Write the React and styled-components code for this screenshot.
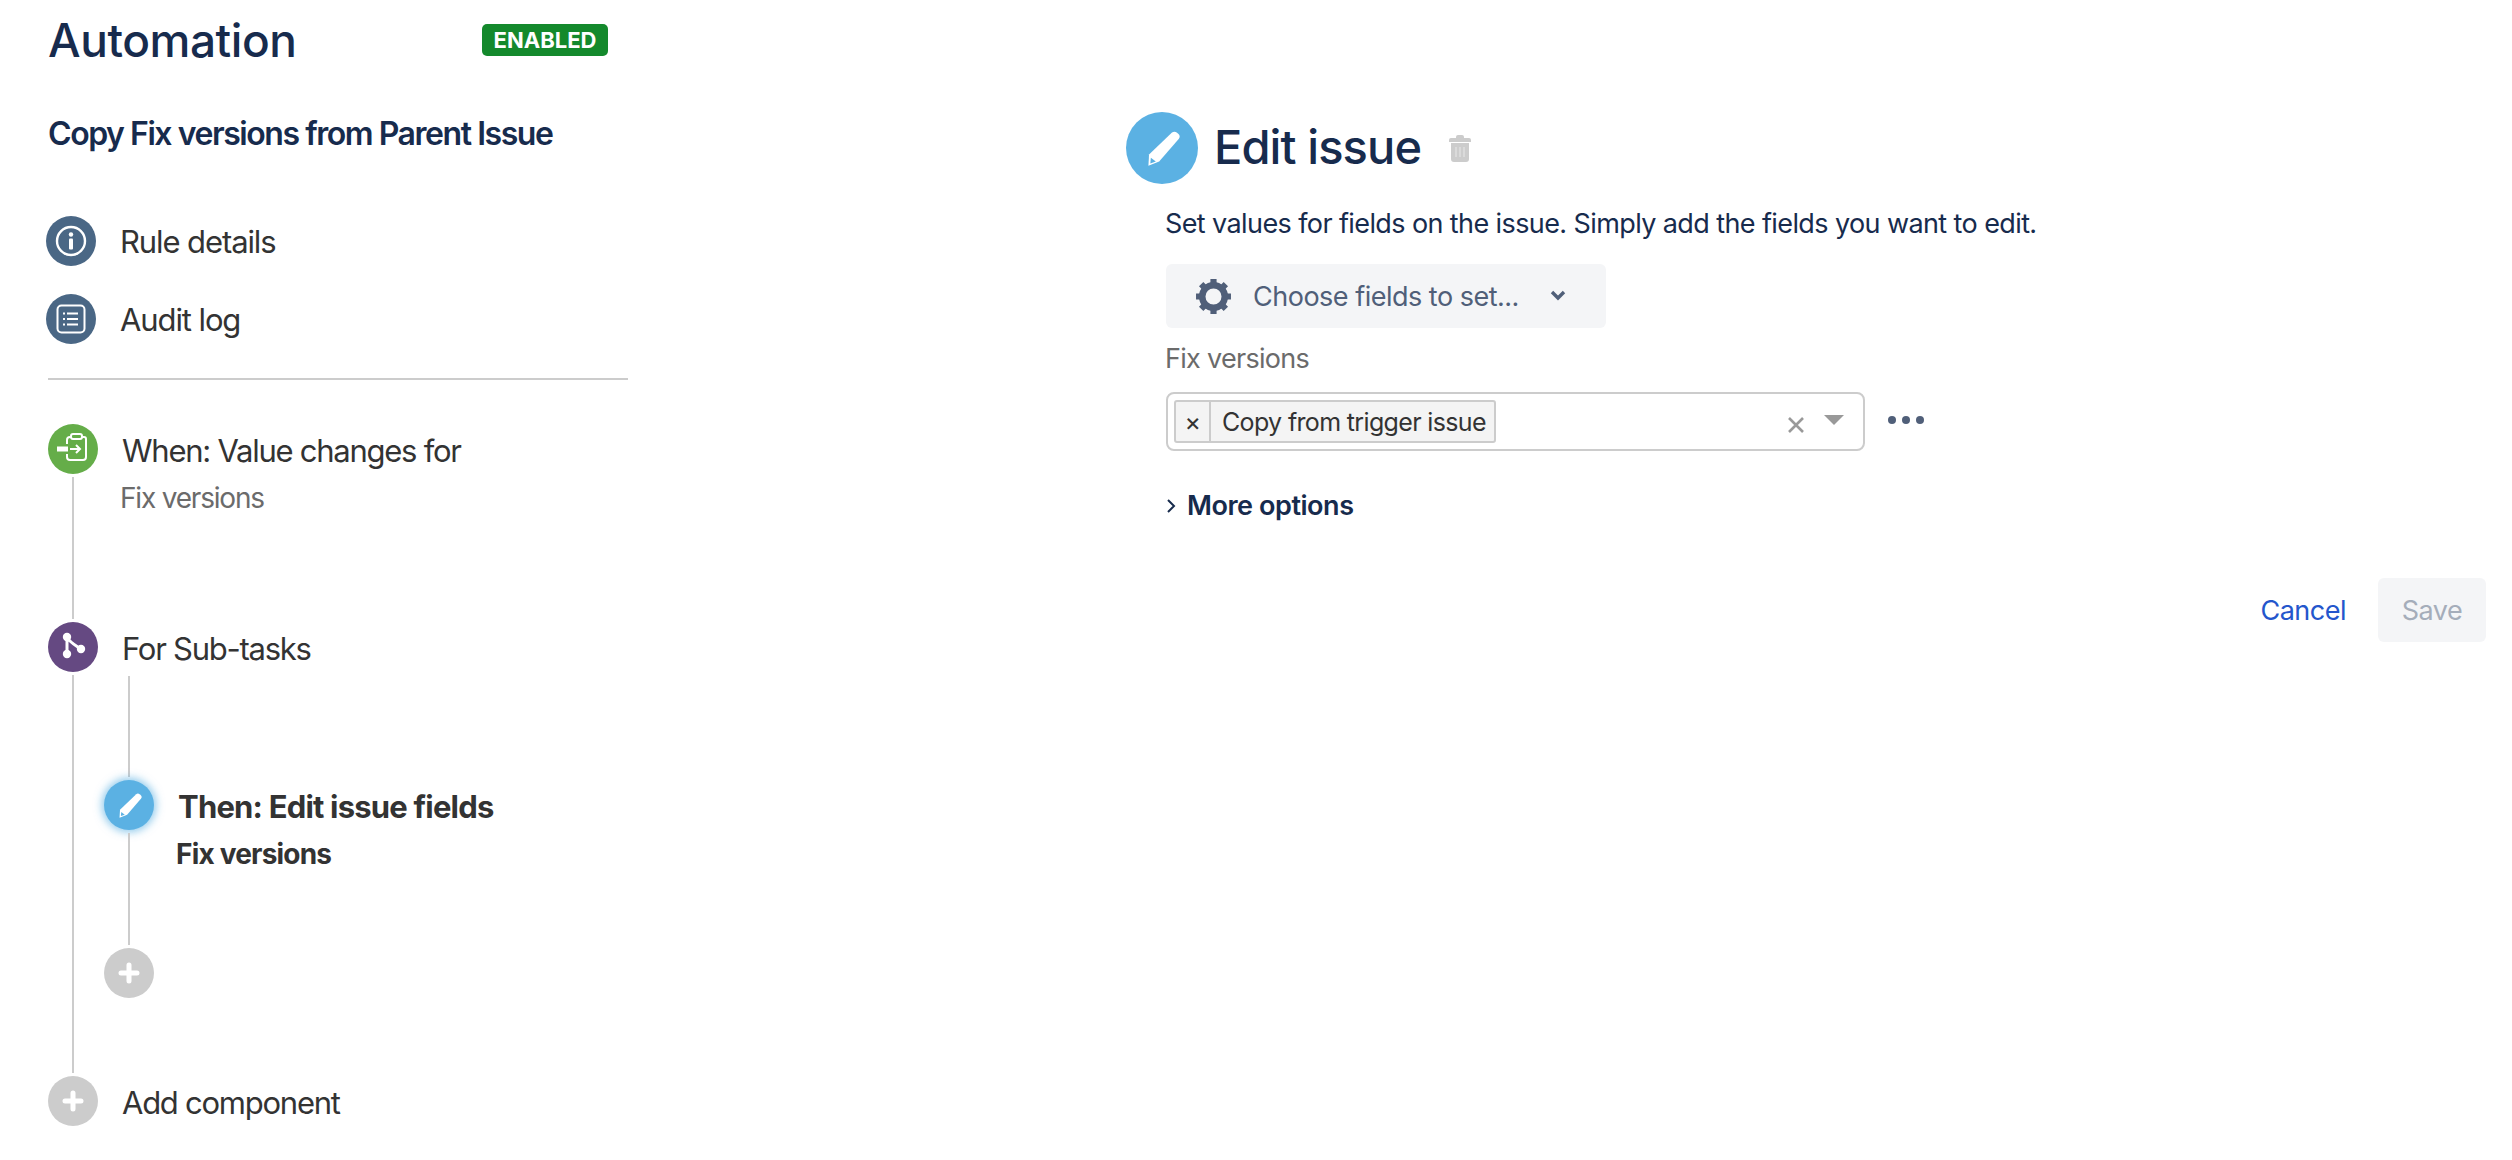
import React from 'react';
import styled, { createGlobalStyle } from 'styled-components';

const GlobalStyle = createGlobalStyle`
  html, body { margin: 0; padding: 0; background: #fff; }
  body { font-family: Inter, "Liberation Sans", sans-serif; color: #333; }
`;

const Page = styled.div`
  display: flex;
  align-items: flex-start;
  width: 2512px;
  height: 1160px;
  overflow: hidden;
  box-sizing: border-box;
  padding-left: 48px;
`;

const Sidebar = styled.aside`
  display: flex;
  flex-direction: column;
  flex: 0 0 580px;
`;

const Header = styled.div`
  display: flex;
  align-items: center;
  height: 40px;
  margin-top: 20px;
`;

const Title = styled.h1`
  margin: 0;
  width: 434px;
  font-size: 46px;
  line-height: 42px;
  font-weight: 500;
  letter-spacing: -0.45px;
  color: #172b4d;
`;

const Badge = styled.span`
  display: flex;
  align-items: center;
  justify-content: center;
  width: 126px;
  height: 32px;
  border-radius: 5px;
  background: #14892c;
  color: #fff;
  font-size: 22px;
  font-weight: 700;
`;

const RuleName = styled.h2`
  margin: 54px 0 0;
  font-size: 32px;
  line-height: 40px;
  font-weight: 600;
  color: #172b4d;
  letter-spacing: -1.45px;
`;

const NavList = styled.nav`
  display: flex;
  flex-direction: column;
  gap: 28px;
  margin: 62px 0 0 -2px;
`;

const NavItem = styled.a`
  display: flex;
  align-items: center;
  gap: 24px;
  font-size: 31px;
  letter-spacing: -1.1px;
  color: #333;
`;

const Circle = styled.span`
  display: flex;
  align-items: center;
  justify-content: center;
  flex: 0 0 50px;
  width: 50px;
  height: 50px;
  border-radius: 50%;
  background: ${({ $bg }) => $bg};
  box-shadow: ${({ $glow }) => ($glow ? '0 0 8px 2px rgba(91, 177, 227, 0.7)' : 'none')};
`;

const Divider = styled.hr`
  width: 100%;
  height: 2px;
  margin: 34px 0 44px;
  border: 0;
  background: #ccc;
`;

const Step = styled.div`
  display: flex;
  gap: 6px;
`;

const Rail = styled.div`
  display: flex;
  flex-direction: column;
  align-items: center;
  flex: 0 0 50px;
`;

const RailLine = styled.div`
  flex: 1;
  width: 2px;
  margin: 3px 0;
  background: #ccc;
`;

const StepBody = styled.div`
  flex: 1;
  display: flex;
  flex-direction: column;
`;

const StepTitle = styled.div`
  height: 50px;
  margin-left: 18px;
  font-size: 31px;
  line-height: 54px;
  font-weight: ${({ $bold }) => ($bold ? 700 : 400)};
  letter-spacing: ${({ $bold }) => ($bold ? -0.8 : -1.25)}px;
  color: #333;
  white-space: nowrap;
`;

const StepDetail = styled.div`
  margin: 6px 0 0 16px;
  font-size: 28px;
  line-height: 36px;
  font-weight: ${({ $bold }) => ($bold ? 700 : 400)};
  letter-spacing: ${({ $bold }) => ($bold ? -0.8 : -1.2)}px;
  color: ${({ $bold }) => ($bold ? '#333' : '#6b6b6b')};
`;

const TriggerStep = styled(Step)`
  height: 198px;
`;

const BranchStep = styled(Step)`
  height: 454px;
`;

const NestedLine = styled.div`
  width: 2px;
  height: 101px;
  margin: 4px 0 3px 24px;
  background: #ccc;
`;

const ThenStep = styled(Step)`
  height: 168px;
`;

const Main = styled.main`
  display: flex;
  flex-direction: column;
  flex: 0 0 1360px;
  margin: 112px 0 0 498px;
`;

const ActionHeader = styled.div`
  display: flex;
  align-items: center;
`;

const BigCircle = styled(Circle)`
  flex: 0 0 72px;
  width: 72px;
  height: 72px;
`;

const ActionTitle = styled.h2`
  margin: -3px 28px 0 16px;
  font-size: 47px;
  line-height: 72px;
  font-weight: 500;
  letter-spacing: -0.9px;
  color: #172b4d;
`;

const ActionBody = styled.div`
  display: flex;
  flex-direction: column;
  align-items: flex-start;
  padding-left: 40px;
`;

const Description = styled.p`
  margin: 22px 0 0 -1px;
  font-size: 27px;
  line-height: 36px;
  letter-spacing: -0.6px;
  color: #172b4d;
`;

const FieldsButton = styled.button`
  display: flex;
  align-items: center;
  width: 440px;
  height: 64px;
  margin-top: 22px;
  padding: 0 0 0 29px;
  border: 0;
  border-radius: 6px;
  background: #f4f5f7;
  color: #505f79;
  font: 400 27px Inter, sans-serif;
  letter-spacing: -0.5px;
`;

const FieldsLabel = styled.span`
  margin: 0 31px 0 21px;
`;

const FieldLabel = styled.label`
  margin: 13px 0 0 -1px;
  font-size: 27px;
  line-height: 36px;
  letter-spacing: -0.7px;
  color: #6b6b6b;
`;

const FieldRow = styled.div`
  display: flex;
  align-items: center;
  gap: 23px;
  margin-top: 15px;
`;

const MultiSelect = styled.div`
  display: flex;
  align-items: center;
  box-sizing: border-box;
  width: 699px;
  height: 59px;
  padding: 0 10px 0 6px;
  border: 2px solid #ccc;
  border-radius: 8px;
`;

const Tag = styled.div`
  display: flex;
  align-items: stretch;
  box-sizing: border-box;
  width: 322px;
  height: 43px;
  border: 2px solid #ccc;
  border-radius: 3px;
  background: #f4f4f4;
  color: #333;
  font-size: 25px;
  letter-spacing: -0.65px;
`;

const TagRemove = styled.span`
  display: flex;
  align-items: center;
  justify-content: center;
  width: 33px;
  border-right: 2px solid #ccc;
`;

const TagText = styled.span`
  display: flex;
  align-items: center;
  padding-left: 11px;
  white-space: nowrap;
`;

const ClearIcon = styled.svg`
  margin-left: auto;
  margin-top: 6px;
`;

const DropArrow = styled.span`
  width: 0;
  height: 0;
  margin: -4px 9px 0 19px;
  border-left: 10px solid transparent;
  border-right: 10px solid transparent;
  border-top: 10px solid #999;
`;

const Dots = styled.div`
  display: flex;
  gap: 6px;
  margin-top: -4px;
`;

const Dot = styled.span`
  width: 8px;
  height: 8px;
  border-radius: 50%;
  background: #505f79;
`;

const MoreOptions = styled.div`
  display: flex;
  align-items: center;
  gap: 11px;
  margin-top: 37px;
  font-size: 27px;
  line-height: 36px;
  font-weight: 600;
  letter-spacing: -0.45px;
  color: #172b4d;
`;

const Actions = styled.div`
  display: flex;
  justify-content: flex-end;
  align-items: center;
  gap: 32px;
  margin-top: 54px;
`;

const CancelLink = styled.a`
  font-size: 27px;
  letter-spacing: -0.5px;
  color: #2456cc;
`;

const SaveButton = styled.button`
  width: 108px;
  height: 64px;
  border: 0;
  border-radius: 6px;
  background: #f4f5f7;
  color: #a5adba;
  font: 400 27px Inter, sans-serif;
  letter-spacing: -0.5px;
`;

const Pencil = ({ size }) => (
  <svg width={size} height={size} viewBox="0 0 32 32">
    <path d="M23.4 3.6c1.1-1 2.6-1 3.7-.1l1.4 1.2c1.1 1 1.2 2.5.3 3.6L13.4 26.2 5 29.5l.5-8.9z" fill="#fff" />
    <path d="M6.9 23.2l-.4 4.5 4.3-1.6z" fill="#5bb1e3" />
  </svg>
);

const Plus = () => (
  <svg width="22" height="22" viewBox="0 0 22 22">
    <path d="M11 3v16M3 11h16" stroke="#fff" strokeWidth="5" strokeLinecap="round" />
  </svg>
);

const InfoIcon = () => (
  <svg width="34" height="34" viewBox="0 0 34 34" fill="none">
    <circle cx="17" cy="17" r="14" stroke="#fff" strokeWidth="2.4" />
    <circle cx="17" cy="10.5" r="2.2" fill="#fff" />
    <rect x="15" y="14.5" width="4" height="11" rx="1" fill="#fff" />
  </svg>
);

const LogIcon = () => (
  <svg width="34" height="34" viewBox="0 0 34 34" fill="none">
    <rect x="3.5" y="3.5" width="27" height="27" rx="4" stroke="#fff" strokeWidth="2" />
    <path d="M13 11.5h11M13 17h11M13 22.5h11" stroke="#fff" strokeWidth="2" />
    <path d="M9 11.5h2M9 17h2M9 22.5h2" stroke="#fff" strokeWidth="2" />
  </svg>
);

const TriggerIcon = () => (
  <svg width="36" height="36" viewBox="0 0 36 36" fill="none">
    <path d="M12 13V9a3 3 0 0 1 3-3h14a2 2 0 0 1 2 2v18a3 3 0 0 1-3 3H15a3 3 0 0 1-3-3v-3" stroke="#fff" strokeWidth="2" />
    <rect x="16" y="3" width="11" height="5" rx="2" fill="#65ad49" stroke="#fff" strokeWidth="2" />
    <rect x="2" y="15.5" width="11" height="5" fill="#fff" />
    <path d="M15 18h9M21 14l4 4-4 4" stroke="#fff" strokeWidth="2" />
  </svg>
);

const BranchIcon = () => (
  <svg width="36" height="36" viewBox="0 0 36 36" fill="none">
    <path d="M12 8v17M12 8c2 5 8 8 14 12" stroke="#fff" strokeWidth="3" />
    <circle cx="12" cy="8" r="4.2" fill="#fff" />
    <circle cx="12" cy="25" r="4.2" fill="#fff" />
    <circle cx="26" cy="20" r="4.2" fill="#fff" />
  </svg>
);

const GearIcon = () => (
  <svg width="37" height="37" viewBox="0 0 36 36" fill="none">
    <circle cx="18" cy="18" r="11" stroke="#505f79" strokeWidth="6.4" />
    <path d="M18 1v7M18 28v7M1 18h7M28 18h7M6 6l5 5M25 25l5 5M30 6l-5 5M11 25l-5 5" stroke="#505f79" strokeWidth="6" />
  </svg>
);

const TrashIcon = () => (
  <svg width="22" height="28" viewBox="0 0 22 28">
    <path d="M7 3a2 2 0 0 1 2-2h4a2 2 0 0 1 2 2v1h5a2 2 0 0 1 2 2v2H0V6a2 2 0 0 1 2-2h5z" fill="#ccc" />
    <path d="M2 9h18v16a3 3 0 0 1-3 3H5a3 3 0 0 1-3-3z" fill="#ccc" />
    <path d="M7 13v10M11 13v10M15 13v10" stroke="#e8e8e8" strokeWidth="1" />
  </svg>
);

const Chevron = () => (
  <svg width="16" height="12" viewBox="0 0 16 12" fill="none">
    <path d="M2 2l6 6 6-6" stroke="#505f79" strokeWidth="3.4" />
  </svg>
);

const App = () => (
  <>
    <GlobalStyle />
    <Page>
      <Sidebar>
        <Header>
          <Title>Automation</Title>
          <Badge>ENABLED</Badge>
        </Header>
        <RuleName>Copy Fix versions from Parent Issue</RuleName>
        <NavList>
          <NavItem>
            <Circle $bg="#4a6785"><InfoIcon /></Circle>
            Rule details
          </NavItem>
          <NavItem>
            <Circle $bg="#4a6785"><LogIcon /></Circle>
            Audit log
          </NavItem>
        </NavList>
        <Divider />
        <TriggerStep>
          <Rail>
            <Circle $bg="#65ad49"><TriggerIcon /></Circle>
            <RailLine />
          </Rail>
          <StepBody>
            <StepTitle>When: Value changes for</StepTitle>
            <StepDetail>Fix versions</StepDetail>
          </StepBody>
        </TriggerStep>
        <BranchStep>
          <Rail>
            <Circle $bg="#654982"><BranchIcon /></Circle>
            <RailLine />
          </Rail>
          <StepBody>
            <StepTitle>For Sub-tasks</StepTitle>
            <NestedLine />
            <ThenStep>
              <Rail>
                <Circle $bg="#5bb1e3" $glow><Pencil size={29} /></Circle>
                <RailLine />
              </Rail>
              <StepBody>
                <StepTitle $bold>Then: Edit issue fields</StepTitle>
                <StepDetail $bold>Fix versions</StepDetail>
              </StepBody>
            </ThenStep>
            <Circle $bg="#ccc"><Plus /></Circle>
          </StepBody>
        </BranchStep>
        <Step>
          <Rail>
            <Circle $bg="#ccc"><Plus /></Circle>
          </Rail>
          <StepBody>
            <StepTitle>Add component</StepTitle>
          </StepBody>
        </Step>
      </Sidebar>
      <Main>
        <ActionHeader>
          <BigCircle $bg="#5bb1e3"><Pencil size={41} /></BigCircle>
          <ActionTitle>Edit issue</ActionTitle>
          <TrashIcon />
        </ActionHeader>
        <ActionBody>
          <Description>Set values for fields on the issue. Simply add the fields you want to edit.</Description>
          <FieldsButton>
            <GearIcon />
            <FieldsLabel>Choose fields to set...</FieldsLabel>
            <Chevron />
          </FieldsButton>
          <FieldLabel>Fix versions</FieldLabel>
          <FieldRow>
            <MultiSelect>
              <Tag>
                <TagRemove>×</TagRemove>
                <TagText>Copy from trigger issue</TagText>
              </Tag>
              <ClearIcon width="18" height="18" viewBox="0 0 18 18" fill="none">
                <path d="M2 2l14 14M16 2L2 16" stroke="#999" strokeWidth="2.6" />
              </ClearIcon>
              <DropArrow />
            </MultiSelect>
            <Dots><Dot /><Dot /><Dot /></Dots>
          </FieldRow>
          <MoreOptions>
            <svg width="10" height="16" viewBox="0 0 10 16" fill="none">
              <path d="M2 2l6 6-6 6" stroke="#172b4d" strokeWidth="2" />
            </svg>
            More options
          </MoreOptions>
        </ActionBody>
        <Actions>
          <CancelLink>Cancel</CancelLink>
          <SaveButton>Save</SaveButton>
        </Actions>
      </Main>
    </Page>
  </>
);

export default App;
